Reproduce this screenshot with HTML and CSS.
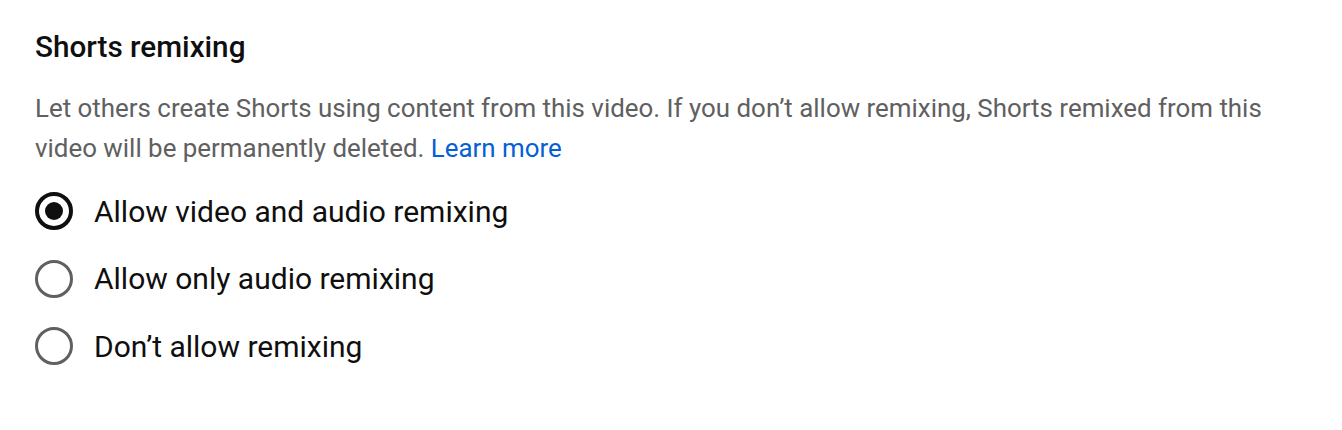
FILE: index.html
```html
<!DOCTYPE html>
<html lang="en">
<head>
  <meta charset="UTF-8">
  <title>Shorts remixing</title>
  <link rel="stylesheet" href="styles.css">
</head>
<body>
  <section class="setting">
    <h2 class="setting-title">Shorts remixing</h2>
    <p class="setting-desc">
      Let others create Shorts using content from this video. If you don’t allow remixing, Shorts remixed from this
      video will be permanently deleted. <a href="#" class="learn-more">Learn more</a>
    </p>

    <div class="radio-group">
      <label class="radio-row">
        <span class="radio checked"></span>
        <span class="radio-label">Allow video and audio remixing</span>
      </label>
      <label class="radio-row">
        <span class="radio"></span>
        <span class="radio-label">Allow only audio remixing</span>
      </label>
      <label class="radio-row">
        <span class="radio"></span>
        <span class="radio-label">Don’t allow remixing</span>
      </label>
    </div>
  </section>
</body>
</html>
```

FILE: styles.css
```css
body {
  margin: 0;
  background: #fff;
  font-family: Roboto, "Liberation Sans", Arial, sans-serif;
  color: #0f0f0f;
}
.setting {
  padding: 27px 35px 0 35px;
}
.setting-title {
  margin: 0;
  font-size: 29.7px;
  font-weight: 500;
  line-height: 40px;
}
.setting-desc {
  margin: 21px 0 0 0;
  max-width: 1250px;
  font-size: 25.9px;
  line-height: 40px;
  color: #606060;
}
.learn-more {
  color: #065fd4;
  text-decoration: none;
}
.radio-group {
  margin-top: 23px;
  display: flex;
  flex-direction: column;
  gap: 27.5px;
}
.radio-row {
  display: flex;
  align-items: center;
  gap: 21px;
  height: 40px;
}
.radio {
  box-sizing: border-box;
  width: 38px;
  height: 38px;
  border-radius: 50%;
  border: 3px solid #606060;
  display: flex;
  align-items: center;
  justify-content: center;
}
.radio.checked {
  border: 4px solid #0f0f0f;
}
.radio.checked::after {
  content: "";
  width: 18px;
  height: 18px;
  border-radius: 50%;
  background: #0f0f0f;
}
.radio-label {
  font-size: 30px;
}
```
